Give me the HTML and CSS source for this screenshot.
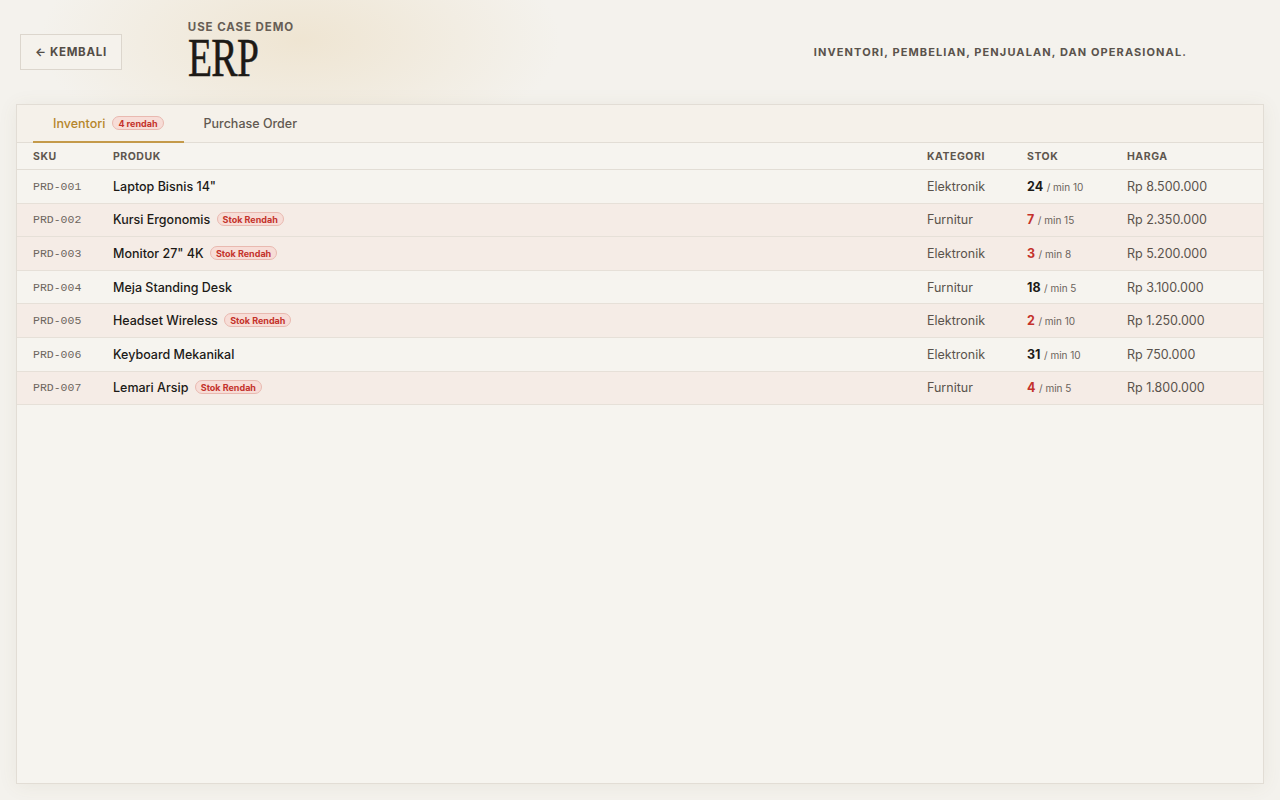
FILE: index.html
```html
<!DOCTYPE html>
<html lang="id">
<head>
<meta charset="UTF-8">
<title>ERP - Use Case Demo</title>
<link rel="stylesheet" href="styles.css">
</head>
<body>
<div class="page">
	<header class="topbar">
		<a class="back" href="#">&larr; KEMBALI</a>
		<div class="title">
			<div class="kicker">USE CASE DEMO</div>
			<h1 class="logo"><span>ERP</span></h1>
		</div>
		<div class="tagline">INVENTORI, PEMBELIAN, PENJUALAN, DAN OPERASIONAL.</div>
	</header>

	<section class="panel">
		<nav class="tabs">
			<a class="tab active" href="#">Inventori <span class="badge">4 rendah</span></a>
			<a class="tab" href="#">Purchase Order</a>
		</nav>
		<table class="grid">
			<colgroup>
				<col class="c-sku"><col><col class="c-cat"><col class="c-stok"><col class="c-harga">
			</colgroup>
			<thead>
				<tr><th>SKU</th><th>PRODUK</th><th>KATEGORI</th><th>STOK</th><th>HARGA</th></tr>
			</thead>
			<tbody>
				<tr>
					<td class="sku">PRD-001</td>
					<td class="name">Laptop Bisnis 14"</td>
					<td>Elektronik</td>
					<td><b>24</b> <small>/ min 10</small></td>
					<td>Rp 8.500.000</td>
				</tr>
				<tr class="low">
					<td class="sku">PRD-002</td>
					<td class="name">Kursi Ergonomis <span class="badge">Stok Rendah</span></td>
					<td>Furnitur</td>
					<td><b>7</b> <small>/ min 15</small></td>
					<td>Rp 2.350.000</td>
				</tr>
				<tr class="low">
					<td class="sku">PRD-003</td>
					<td class="name">Monitor 27" 4K <span class="badge">Stok Rendah</span></td>
					<td>Elektronik</td>
					<td><b>3</b> <small>/ min 8</small></td>
					<td>Rp 5.200.000</td>
				</tr>
				<tr>
					<td class="sku">PRD-004</td>
					<td class="name">Meja Standing Desk</td>
					<td>Furnitur</td>
					<td><b>18</b> <small>/ min 5</small></td>
					<td>Rp 3.100.000</td>
				</tr>
				<tr class="low">
					<td class="sku">PRD-005</td>
					<td class="name">Headset Wireless <span class="badge">Stok Rendah</span></td>
					<td>Elektronik</td>
					<td><b>2</b> <small>/ min 10</small></td>
					<td>Rp 1.250.000</td>
				</tr>
				<tr>
					<td class="sku">PRD-006</td>
					<td class="name">Keyboard Mekanikal</td>
					<td>Elektronik</td>
					<td><b>31</b> <small>/ min 10</small></td>
					<td>Rp 750.000</td>
				</tr>
				<tr class="low">
					<td class="sku">PRD-007</td>
					<td class="name">Lemari Arsip <span class="badge">Stok Rendah</span></td>
					<td>Furnitur</td>
					<td><b>4</b> <small>/ min 5</small></td>
					<td>Rp 1.800.000</td>
				</tr>
			</tbody>
		</table>
	</section>
</div>
</body>
</html>
```

FILE: styles.css
```css
html, body {
	margin: 0;
	height: 100%;
}

body {
	font-family: Inter, "Noto Sans", "Liberation Sans", sans-serif;
	color: #1c1a17;
	background-color: #f4f2ed;
	background-image: radial-gradient(ellipse 260px 120px at 300px 40px, rgba(236, 222, 196, 0.65), rgba(244, 242, 237, 0) 100%);
}

.page {
	height: 100%;
	display: flex;
	flex-direction: column;
	padding: 0 16px 16px;
	box-sizing: border-box;
}

/* top bar */
.topbar {
	display: flex;
	align-items: center;
	height: 104px;
	padding: 0 77px 0 4px;
	box-sizing: border-box;
}

.back {
	display: inline-block;
	height: 36px;
	line-height: 34px;
	padding: 0 14px;
	box-sizing: border-box;
	border: 1px solid #dcd6cd;
	background-color: #f5f2ec;
	color: #544d46;
	font-size: 11.5px;
	font-weight: 700;
	letter-spacing: 0.06em;
	text-decoration: none;
}

.title {
	margin-left: 66px;
	margin-top: -2px;
}

.kicker {
	font-size: 11.5px;
	font-weight: 700;
	letter-spacing: 0.08em;
	color: #675e55;
	line-height: 12px;
	margin-bottom: 2px;
}

.logo {
	margin: 0;
	height: 46px;
	line-height: 46px;
	font-family: "Liberation Serif", "DejaVu Serif", serif;
	font-weight: 400;
	font-size: 54px;
	color: #1d1a16;
	letter-spacing: -1px;
}

.logo span {
	display: inline-block;
	transform: scaleX(0.73);
	transform-origin: left center;
	-webkit-text-stroke: 0.5px #1d1a16;
}

.tagline {
	margin-left: auto;
	font-size: 11px;
	font-weight: 700;
	letter-spacing: 0.1em;
	color: #5a534c;
}

/* panel */
.panel {
	flex: 1;
	border: 1px solid #e2ddd5;
	background-color: #f6f4ef;
	box-shadow: 0 2px 18px rgba(120, 100, 70, 0.08);
}

.tabs {
	display: flex;
	height: 37px;
	padding-left: 16px;
	border-bottom: 1px solid #e2ddd5;
	background-color: #f5f1ea;
}

.tab {
	display: flex;
	align-items: center;
	gap: 7px;
	padding: 0 20px;
	font-size: 12.5px;
	font-weight: 500;
	color: #615951;
	text-decoration: none;
	border-bottom: 2px solid transparent;
	margin-bottom: -1px;
}

.tab.active {
	color: #b5862c;
	border-bottom-color: #c49a4a;
}

.badge {
	display: inline-block;
	height: 14px;
	line-height: 13px;
	padding: 0 5px;
	box-sizing: border-box;
	border: 1px solid #e9b9b0;
	border-radius: 8px;
	background-color: #f7ddd7;
	color: #c4322b;
	font-size: 9px;
	font-weight: 700;
}

.name .badge {
	margin-left: 3px;
	vertical-align: 1px;
}

/* table */
.grid {
	width: 100%;
	border-collapse: collapse;
	table-layout: fixed;
}

.c-sku { width: 80px; }
.c-cat { width: 100px; }
.c-stok { width: 100px; }
.c-harga { width: 152px; }

.grid th {
	height: 26px;
	padding: 0 0 0 16px;
	text-align: left;
	font-size: 10.5px;
	font-weight: 700;
	letter-spacing: 0.05em;
	color: #5e564e;
	border-bottom: 1px solid #e2ddd5;
}

.grid td {
	height: 32.6px;
	padding: 0 0 0 16px;
	font-size: 12.5px;
	color: #5a534c;
	border-bottom: 1px solid #e6e0d8;
	white-space: nowrap;
}

.grid tr.low td {
	background-color: #f5ece6;
}

.grid td.sku {
	font-family: "Liberation Mono", "DejaVu Sans Mono", monospace;
	font-size: 11.5px;
	color: #6e665e;
}

.grid td.name {
	color: #1c1a17;
	font-weight: 500;
}

.grid td b {
	font-weight: 700;
	color: #1c1a17;
}

.grid tr.low td b {
	color: #c4322b;
}

.grid td small {
	font-size: 10px;
	color: #6b635b;
}
```
